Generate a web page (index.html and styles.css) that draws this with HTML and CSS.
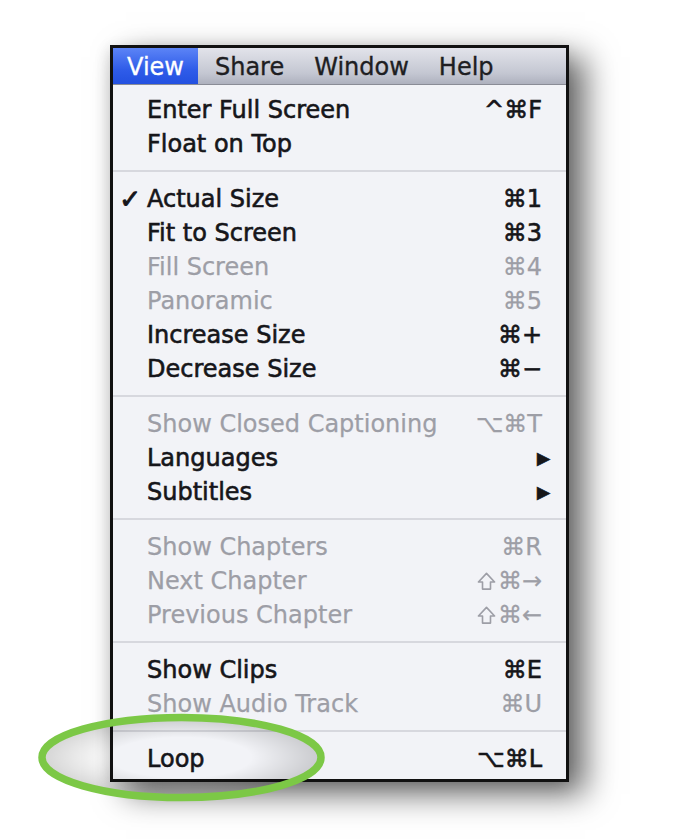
FILE: index.html
```html
<!DOCTYPE html>
<html>
<head>
<meta charset="utf-8">
<link rel="stylesheet" href="styles.css">
</head>
<body>
<div class="stage">
  <div class="menu">
    <div class="menubar">
      <span class="title active">View</span>
      <span class="title">Share</span>
      <span class="title">Window</span>
      <span class="title">Help</span>
    </div>
    <div class="items">
      <div class="item"><span class="check"></span><span class="label">Enter Full Screen</span><span class="key">^⌘F</span></div>
      <div class="item"><span class="check"></span><span class="label">Float on Top</span><span class="key"></span></div>
      <div class="sep"></div>
      <div class="item"><span class="check">✓</span><span class="label">Actual Size</span><span class="key">⌘1</span></div>
      <div class="item"><span class="check"></span><span class="label">Fit to Screen</span><span class="key">⌘3</span></div>
      <div class="item off"><span class="check"></span><span class="label">Fill Screen</span><span class="key">⌘4</span></div>
      <div class="item off"><span class="check"></span><span class="label">Panoramic</span><span class="key">⌘5</span></div>
      <div class="item"><span class="check"></span><span class="label">Increase Size</span><span class="key">⌘+</span></div>
      <div class="item"><span class="check"></span><span class="label">Decrease Size</span><span class="key">⌘−</span></div>
      <div class="sep"></div>
      <div class="item off"><span class="check"></span><span class="label">Show Closed Captioning</span><span class="key">⌥⌘T</span></div>
      <div class="item"><span class="check"></span><span class="label">Languages</span><span class="key arrow">▶</span></div>
      <div class="item"><span class="check"></span><span class="label">Subtitles</span><span class="key arrow">▶</span></div>
      <div class="sep"></div>
      <div class="item off"><span class="check"></span><span class="label">Show Chapters</span><span class="key">⌘R</span></div>
      <div class="item off"><span class="check"></span><span class="label">Next Chapter</span><span class="key"><svg class="shift" viewBox="0 0 20 20"><path d="M10 1.5 L1.5 10.5 H5.8 V18 H14.2 V10.5 H18.5 Z" fill="none" stroke="currentColor" stroke-width="1.7" stroke-linejoin="round"/></svg>⌘→</span></div>
      <div class="item off"><span class="check"></span><span class="label">Previous Chapter</span><span class="key"><svg class="shift" viewBox="0 0 20 20"><path d="M10 1.5 L1.5 10.5 H5.8 V18 H14.2 V10.5 H18.5 Z" fill="none" stroke="currentColor" stroke-width="1.7" stroke-linejoin="round"/></svg>⌘←</span></div>
      <div class="sep"></div>
      <div class="item"><span class="check"></span><span class="label">Show Clips</span><span class="key">⌘E</span></div>
      <div class="item off"><span class="check"></span><span class="label">Show Audio Track</span><span class="key">⌘U</span></div>
      <div class="sep"></div>
      <div class="item"><span class="check"></span><span class="label">Loop</span><span class="key">⌥⌘L</span></div>
    </div>
  </div>
  <svg class="ring" width="320" height="110" viewBox="0 0 320 110">
    <defs>
      <radialGradient id="inner" cx="0.5" cy="0.5" r="0.5">
        <stop offset="0.5" stop-color="#000" stop-opacity="0"/>
        <stop offset="1" stop-color="#000" stop-opacity="0.17"/>
      </radialGradient>
    </defs>
    <ellipse cx="151.5" cy="52.5" rx="139.5" ry="40" fill="url(#inner)"/>
    <ellipse cx="151.5" cy="52.5" rx="139.5" ry="40" fill="none" stroke="#7cc846" stroke-width="7.5"/>
  </svg>
</div>
</body>
</html>
```
FILE: styles.css
```css
html, body {
  margin: 0;
  padding: 0;
  background: #ffffff;
}
.stage {
  position: relative;
  width: 674px;
  height: 840px;
  padding-top: 45px;
  padding-left: 110px;
  box-sizing: border-box;
  font-family: "DejaVu Sans", "Liberation Sans", sans-serif;
}
.menu {
  width: 459px;
  box-sizing: border-box;
  border: 3px solid #111;
  background: #f2f3f7;
  box-shadow: 16px 12px 30px rgba(0,0,0,0.6), -2px 4px 14px rgba(0,0,0,0.12);
}
.menubar {
  height: 37px;
  display: flex;
  align-items: stretch;
  background: linear-gradient(#e2e3ea, #c4c7d2 70%, #aeb1be);
  border-bottom: 1px solid #8a8c96;
  box-sizing: border-box;
}
.title {
  display: flex;
  align-items: center;
  padding: 1px 15px 0 15px;
  font-size: 24px;
  color: #1e1e22;
  -webkit-text-stroke: 0.35px #1e1e22;
}
.title.active {
  padding: 1px 14px 0 14px;
  margin-right: 2px;
  background: linear-gradient(#5c84f6, #2f5ce9 60%, #2350e0);
  color: #ffffff;
  -webkit-text-stroke: 0.3px #ffffff;
}
.items {
  padding: 7px 0 4px 0;
}
.item {
  height: 34px;
  box-sizing: border-box;
  padding-top: 2px;
  display: flex;
  align-items: center;
  font-size: 24px;
  color: #16161a;
  -webkit-text-stroke: 0.6px #16161a;
}
.item.off {
  color: #9d9ea6;
  -webkit-text-stroke: 0.25px #9d9ea6;
}
.check {
  width: 34px;
  flex: none;
  text-align: right;
  padding-right: 6px;
  box-sizing: border-box;
  font-size: 26px;
  -webkit-text-stroke: 1px #16161a;
}
.label {
  flex: 1;
}
.key {
  display: flex;
  align-items: center;
  padding-right: 24px;
}
.key.arrow {
  font-size: 17px;
  padding-right: 16px;
}
.shift {
  display: block;
  flex: none;
  width: 19px;
  height: 19px;
  margin-right: 2px;
}
.sep {
  height: 21px;
  display: flex;
  align-items: center;
}
.sep::before {
  content: "";
  display: block;
  width: 100%;
  height: 2px;
  background: #d7d8de;
}
.ring {
  position: absolute;
  left: 30px;
  top: 705px;
}
```
